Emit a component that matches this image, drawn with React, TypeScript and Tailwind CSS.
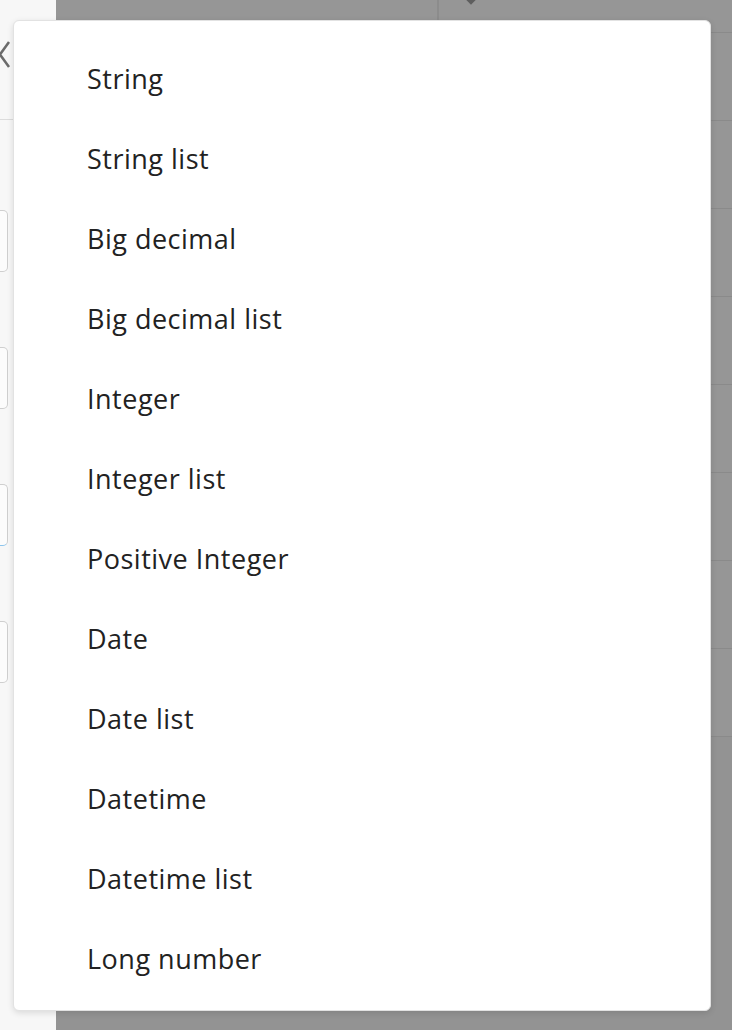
import React from "react";

const items = [
  "String",
  "String list",
  "Big decimal",
  "Big decimal list",
  "Integer",
  "Integer list",
  "Positive Integer",
  "Date",
  "Date list",
  "Datetime",
  "Datetime list",
  "Long number",
];

export default function App() {
  return (
    <div
      className="relative w-[732px] h-[1030px] overflow-hidden flex"
      style={{ fontFamily: '"Open Sans", "Noto Sans", sans-serif' }}
    >
      {/* left panel */}
      <div className="w-[56px] h-full bg-[#f7f7f7] flex flex-col">
        <div className="h-[120px] border-b border-[#dcdcdc] pt-[40px]">
          <svg width="14" height="30" viewBox="0 0 14 30" className="-ml-[2px]">
            <path d="M11 2 L2 14.5 L11 27" fill="none" stroke="#6b6b6b" strokeWidth="2.5" />
          </svg>
        </div>
        <div className="flex flex-col pt-[90px] gap-[75px]">
          <div className="w-[8px] h-[62px] border border-l-0 border-[#cfcfcf] rounded-r-[5px] bg-[#fcfcfc]" />
          <div className="w-[8px] h-[62px] border border-l-0 border-[#cfcfcf] rounded-r-[5px] bg-[#fcfcfc]" />
          <div className="w-[8px] h-[62px] border border-l-0 border-[#cfcfcf] border-b-[#8ec5ec] rounded-r-[5px] bg-[#fcfcfc]" />
          <div className="w-[8px] h-[62px] border border-l-0 border-[#cfcfcf] rounded-r-[5px] bg-[#fcfcfc]" />
        </div>
      </div>

      {/* right overlay area */}
      <div className="flex-1 h-full bg-[#969696] flex flex-col">
        <div className="h-[33px] border-b border-[#8a8a8a] flex relative">
          <div className="w-[383px] border-r-2 border-[#8c8c8c]" />
          <div className="absolute left-[411px] top-[-5px] w-[8px] h-[8px] bg-[#5e5e5e] rotate-45" />
        </div>
        {Array.from({ length: 8 }).map((_, i) => (
          <div key={i} className="h-[88px] border-b border-[#8a8a8a]" />
        ))}
        <div className="flex-1 bg-[#939393]" />
      </div>

      {/* dropdown */}
      <div className="absolute left-[13px] top-[20px] w-[698px] h-[991px] bg-white rounded-[6px] border border-[#e2e2e2] shadow-[0_2px_6px_rgba(0,0,0,0.12)] pt-[17px]">
        {items.map((t) => (
          <div
            key={t}
            className="h-[80px] flex items-center pl-[73px] text-[27px] tracking-[0.5px] text-[#222222] leading-none"
          >
            {t}
          </div>
        ))}
      </div>
    </div>
  );
}
